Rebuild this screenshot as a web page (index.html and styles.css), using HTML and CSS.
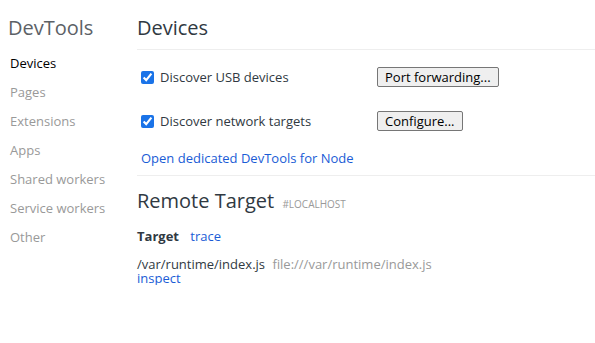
FILE: index.html
```html
<!DOCTYPE html>
<html lang="en">
<head>
  <meta charset="UTF-8">
  <title>Inspect with Chrome Developer Tools</title>
  <link rel="stylesheet" href="styles.css">
</head>
<body>
  <div class="page">
    <nav class="sidebar">
      <h1 class="sidebar-title">DevTools</h1>
      <div class="nav-item selected">Devices</div>
      <div class="nav-item">Pages</div>
      <div class="nav-item">Extensions</div>
      <div class="nav-item">Apps</div>
      <div class="nav-item">Shared workers</div>
      <div class="nav-item">Service workers</div>
      <div class="nav-item">Other</div>
    </nav>

    <main class="content">
      <header class="content-header">
        <h2>Devices</h2>
      </header>

      <div class="device-row first">
        <label class="check"><input type="checkbox" checked> Discover USB devices</label>
        <button class="btn">Port forwarding...</button>
      </div>
      <div class="device-row">
        <label class="check"><input type="checkbox" checked> Discover network targets</label>
        <button class="btn">Configure...</button>
      </div>

      <div class="node-link"><a href="#">Open dedicated DevTools for Node</a></div>

      <section class="remote">
        <h3>Remote Target <span class="host">#LOCALHOST</span></h3>
        <div class="target-head">
          <span class="target-label">Target</span>
          <a href="#">trace</a>
        </div>
        <div class="target-row">
          <span class="target-name">/var/runtime/index.js</span>
          <span class="target-url">file:///var/runtime/index.js</span>
        </div>
        <a href="#" class="inspect">inspect</a>
      </section>
    </main>
  </div>
</body>
</html>
```

FILE: styles.css
```css
* {
  margin: 0;
  padding: 0;
  box-sizing: border-box;
}

body {
  font-family: 'Open Sans', sans-serif;
  font-size: 13px;
  color: #303942;
  background: #fff;
}

a {
  color: #1a5cd6;
  text-decoration: none;
}

.page {
  display: flex;
}

.sidebar {
  width: 137px;
  flex-shrink: 0;
}

.sidebar-title {
  font-size: 20px;
  font-weight: 400;
  color: #5c6166;
  padding: 14px 0 0 8px;
  height: 49px;
}

.nav-item {
  color: #999;
  padding-left: 10px;
  height: 29px;
  line-height: 29px;
}

.nav-item.selected {
  color: #000;
}

.content {
  flex: 1;
}

.content-header {
  border-bottom: 1px solid #eee;
  height: 50px;
  padding-top: 14px;
}

.content-header h2 {
  font-size: 20px;
  font-weight: 400;
  color: #303942;
}

.device-row {
  display: flex;
  align-items: center;
  height: 20px;
  margin-top: 24px;
  padding-left: 4px;
}

.device-row.first {
  margin-top: 17px;
}

.check {
  display: flex;
  align-items: center;
  width: 236px;
}

.check input {
  width: 13px;
  height: 13px;
  margin-right: 6px;
  accent-color: #1a73e8;
}

.btn {
  font-family: 'Open Sans', sans-serif;
  font-size: 13px;
  color: #000;
  height: 20px;
  padding: 0 7px;
  background: #efefef;
  border: 1px solid #767676;
  border-radius: 2px;
}

.node-link {
  padding: 18px 0 8px 4px;
  border-bottom: 1px solid #eee;
}

.remote h3 {
  font-size: 20px;
  font-weight: 400;
  margin-top: 11px;
}

.host {
  font-size: 10px;
  color: #999;
  margin-left: 3px;
}

.target-head {
  margin-top: 13px;
}

.target-label {
  font-weight: 700;
  margin-right: 8px;
}

.target-row {
  margin-top: 12px;
  line-height: 14px;
}

.target-url {
  color: #999;
  margin-left: 4px;
}

.inspect {
  display: block;
  line-height: 14px;
}
```
